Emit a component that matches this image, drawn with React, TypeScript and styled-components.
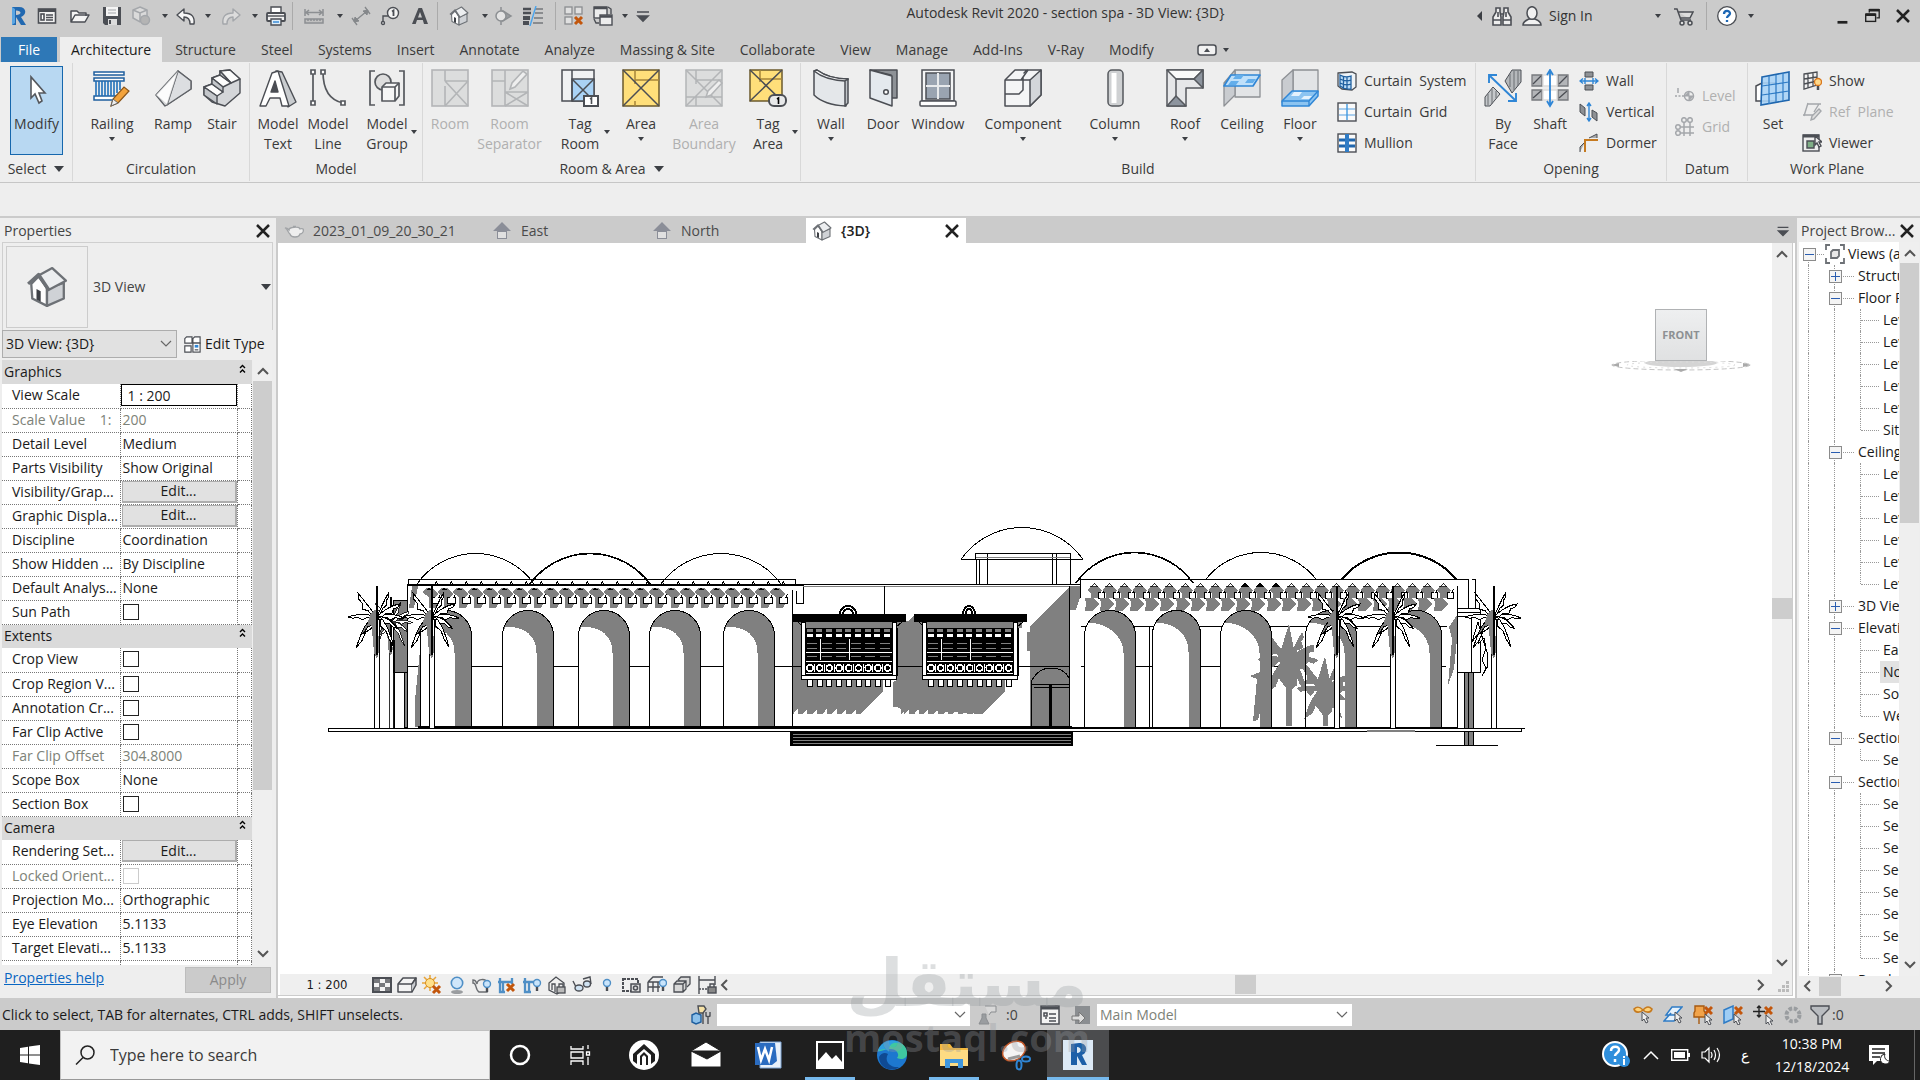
import React from "react";
import styled, { createGlobalStyle } from "styled-components";

const Global = createGlobalStyle`
  * { box-sizing: border-box; }
  html, body { margin: 0; height: 100%; overflow: hidden; }
  body { font-family: "Open Sans", "Noto Sans", sans-serif; font-size: 14px; line-height: 20px; color: #1a1a1a; background: #eee; }
  button, input, select { font: inherit; color: inherit; margin: 0; padding: 0; border: 0; background: none; border-radius: 0; }
  button { white-space: nowrap; }
  svg { display: block; flex: none; }
`;

/* ---------- icons ---------- */
const D = "#4b4e54";
const M = "#a4a7ab";
const B = "#2f86d6";
const O = "#d9781e";

const cursor = (x: number, y: number) => (
  <path d={`M${x} ${y}v9l2-2 2 4 2-1-2-4h3z`} fill="#eee" stroke={D} />
);
const redX = (x: number, y: number) => (
  <path d={`M${x} ${y}l7 7m0-7l-7 7`} stroke="#c2560c" strokeWidth="3" />
);
const bulb = (x: number, y: number) => (
  <g>
    <circle cx={x} cy={y} r="3.5" fill="#c9e4fb" stroke="#4f8fc6" strokeWidth="1.4" />
    <path d={`M${x} ${y + 4}v4`} stroke={D} strokeWidth="2.4" />
  </g>
);
const house = (
  <g stroke="#6d7176" strokeWidth="1.1" strokeLinejoin="round">
    <path d="M2.500 8.500L6 5l4 5.500V19l-7-3.500z" fill="#fdfdfd" />
    <path d="M10 10.500l8-2.500v7.500L10 19z" fill="#cfd2d6" />
    <path d="M6 4.500L12.500 1 19 7l-8.500 4.500z" fill="#eceef0" />
    <path d="M1 8.500L6 4l5 7.500" fill="none" strokeWidth="1.500" />
    <path d="M5 16v-5l2 1v5z" fill="#3c3f44" stroke="none" />
  </g>
);

const icons: Record<string, React.ReactNode> = {
  revit: (
    <g>
      <path d="M4 1h7c8 0 8 8 2 10l5 8h-5l-5-8v8H4zM8 4.500V9c6 0 6-4.500 0-4.500z" fill="#2168b0" fillRule="evenodd" />
      <path d="M4 1l3 2v14l-3 2z" fill="#5aa5e2" />
    </g>
  ),
  home: (
    <g fill="none" stroke={D} strokeWidth="1.600">
      <rect x="1.500" y="3" width="17" height="14" fill="#f2f2f2" />
      <path d="M1 4.500h18" strokeWidth="3" />
      <rect x="4" y="8" width="3" height="6" fill="#fff" />
      <path d="M9 9h7M9 11.500h7M9 14h7" />
    </g>
  ),
  open: (
    <path d="M1 16V5h6l2 2h7v3M1 16l4-7h14l-4 7z" fill="#f4f4f4" stroke={D} strokeWidth="1.500" strokeLinejoin="round" />
  ),
  save: (
    <g>
      <path d="M1 1h18v18H3l-2-2z" fill={D} />
      <path d="M4 1h12v9H4z" fill="#f4f4f4" />
      <path d="M6 13h9v6H6z" fill="#dcdcdc" />
      <path d="M7 14h2v4H7z" fill={D} />
      <path d="M6 4h8M6 7h8" stroke={M} />
    </g>
  ),
  sync: (
    <g fill="#dadada" stroke={M} strokeWidth="1.500">
      <path d="M9 1l7 3v8l-7 4-7-4V4z" />
      <path d="M2 4l7 3 7-3M9 7v9" fill="none" />
      <circle cx="14" cy="14" r="4.500" fill="#b4b4b4" />
    </g>
  ),
  undo: <path d="M8 3v4c8 0 11 4 10 11h-4c0-5-2-7-6-7v4L1 9z" fill="#f6f6f6" stroke={D} strokeWidth="1.400" strokeLinejoin="round" />,
  redo: <path d="M12 3v4C4 7 1 11 2 18h4c0-5 2-7 6-7v4l7-6z" fill="#dcdcdc" stroke={M} strokeWidth="1.400" strokeLinejoin="round" />,
  print: (
    <g stroke={D} strokeWidth="1.400">
      <path d="M5 8V1h10v7" fill="#fff" />
      <rect x="1" y="7" width="18" height="8" rx="1" fill="#f2f2f2" strokeWidth="1.800" />
      <path d="M1 10h18" />
      <path d="M5 13h10v6H5z" fill="#e0eef8" />
      <path d="M7 16h6" stroke={B} />
    </g>
  ),
  measure: (
    <g stroke="#8c8f92" fill="none" strokeWidth="1.500">
      <path d="M1 3v7M19 3v7M2 6.500h16M5 4L2 6.500 5 9M15 4l3 2.500L15 9" />
      <path d="M1 13h18v4H1zM4 13v2M7 13v2M10 13v2M13 13v2M16 13v2" fill="#c0c0c0" />
    </g>
  ),
  dim: (
    <g stroke="#85888b" fill="#85888b">
      <path d="M4 15L16 5M1 12l5 7M14 1l5 7" fill="none" strokeWidth="1.300" />
      <path d="M3 16l1-5 4 4zM17 4l-5 1 4 4z" />
    </g>
  ),
  tag: (
    <g stroke={D} fill="none" strokeWidth="1.400">
      <path d="M3 17V10h5" />
      <circle cx="13" cy="7" r="5.500" fill="#f4f4f4" />
      <path d="M12 5.500l1.500-1V10" strokeWidth="1.800" />
      <circle cx="3" cy="17" r="1.500" fill="#fff" />
    </g>
  ),
  textA: <path d="M8.500 2h3.500l6 16h-4l-1.200-4H7l-1.300 4H2zM10 6l-2 5.500h4z" fill={D} fillRule="evenodd" />,
  house,
  section: (
    <g fill="#e3e3e3" stroke="#8c8f92" strokeWidth="1.500">
      <path d="M10 5l8 5-8 5z" fill="#9a9da0" />
      <circle cx="8" cy="10" r="5" />
      <path d="M8 1v4M8 15v4" />
    </g>
  ),
  thin: (
    <g stroke={D}>
      <path d="M0 3h8M0 7h8" strokeWidth="2.500" />
      <path d="M0 12h7M0 17h6" strokeWidth="4" />
      <path d="M12 3h8M12 7h8M11 12h9M10 17h10" strokeWidth="1.200" />
      <path d="M13 0L7 20" stroke="#49a4ee" strokeWidth="1.400" />
    </g>
  ),
  closeHidden: (
    <g stroke="#8a8d90" fill="#e0e0e0" strokeWidth="1.300">
      <rect x="1" y="1" width="7" height="7" />
      <rect x="11" y="1" width="7" height="7" />
      <rect x="1" y="11" width="7" height="7" />
      {redX(11, 11)}
    </g>
  ),
  switchWin: (
    <g stroke={D} fill="#ededed" strokeWidth="1.400">
      <path d="M15 1l3 2v5M1 13l2 4h3" fill="none" />
      <rect x="1" y="1" width="13" height="11" />
      <path d="M1 2h13" strokeWidth="2.500" />
      <rect x="7" y="9" width="12" height="10" />
      <path d="M7 10.500h12" strokeWidth="2.500" />
    </g>
  ),
  custom: <path d="M4 6h12M5 10h10l-5 5z" stroke={D} strokeWidth="1.600" fill={D} />,
  binoculars: (
    <g fill="#eee" stroke={D} strokeWidth="1.600">
      <path d="M4 6V2h4v4l1 5v8H1v-8zM12 6V2h4v4l3 5v8h-8v-8z" />
      <path d="M9 8h2M1 14h8M11 14h8M6 6v5M14 6v5" />
    </g>
  ),
  user: (
    <g fill="#f1f1f1" stroke={D} strokeWidth="1.500">
      <path d="M1 19c0-4 4-5 6-6h6c2 1 6 2 6 6z" />
      <ellipse cx="10" cy="7" rx="5" ry="6.300" />
    </g>
  ),
  cart: (
    <g fill="#ddd" stroke={D} strokeWidth="1.500">
      <path d="M0 3h3l4 11h10M4 6h15l-3 6H6.500" />
      <circle cx="8" cy="17" r="2" />
      <circle cx="16" cy="17" r="2" />
    </g>
  ),
  help: (
    <g>
      <circle cx="10" cy="10" r="9.300" fill="#fff" stroke={D} strokeWidth="1.300" />
      <path d="M7 8c0-4 6-4 6-.5 0 2-3 2-3 4.500M10 14v2" fill="none" stroke="#1d67b4" strokeWidth="2.300" />
    </g>
  ),
  min: <path d="M5 17h11" stroke="#222" strokeWidth="3" />,
  restore: (
    <g fill="none" stroke="#222" strokeWidth="1.500">
      <path d="M7 6V3h11v9h-3" />
      <path d="M7 3.500h11" strokeWidth="3" />
      <rect x="3" y="8" width="11" height="8" />
      <path d="M3 8.500h11" strokeWidth="3" />
    </g>
  ),
  close: <path d="M4 4l12 12M16 4L4 16" stroke="#222" strokeWidth="2.500" />,
  panelSwitch: (
    <g fill="none" stroke={D} strokeWidth="1.500">
      <rect x="1" y="5" width="18" height="10" rx="2.500" fill="#f2f2f2" />
      <path d="M7 12l3-4 3 4z" fill={D} stroke="none" />
    </g>
  ),
  csystem: (
    <g fill="#bcdcf7" stroke="#1f5f9f" strokeWidth="1.300">
      <path d="M1 2l14-1 4 2v13l-4 3-10-1-4-3z" fill="#eef3f7" stroke={D} />
      <path d="M3 4q5 3 11 1v13q-6 1-11-3zM6.500 5v13M10 5.500V18M3 8q6 3 11 1M3 12q6 3 11 1" />
    </g>
  ),
  cgrid: (
    <g fill="#fafafa" stroke={D} strokeWidth="1.400">
      <rect x="1" y="1" width="18" height="18" />
      <path d="M2 7h16M2 13h16" stroke="#8fc0ea" />
      <path d="M10 2v16" stroke="#3f99e0" />
    </g>
  ),
  mullion: (
    <g fill="#fafafa" stroke={D} strokeWidth="1.400">
      <rect x="1" y="1" width="18" height="18" />
      <path d="M2 7h16M2 13h16" stroke="#1f66ae" strokeWidth="3" />
      <path d="M10 1v18" stroke="#2f7cc6" strokeWidth="4" />
    </g>
  ),
  owall: (
    <g stroke={D} fill="#8f9296">
      <path d="M6 1h8v5H6zM6 14h8v5H6z" />
      <path d="M1 10h18M4 7.500L1 10l3 2.500M16 7.500l3 2.500-3 2.500M6 7v6M14 7v6" stroke={B} strokeWidth="1.400" fill="none" />
    </g>
  ),
  overt: (
    <g stroke={D} fill="#8d9094">
      <path d="M1 2l5 4v8l-5-4zM13 8l5 3v8l-5-4z" />
      <path d="M10 1v18M8 4l2-3 2 3M8 16l2 3 2-3" stroke={B} strokeWidth="1.400" fill="none" />
    </g>
  ),
  dormer: (
    <g fill="none" stroke={D}>
      <path d="M1 19v-5l5-5M10 5l8-4v4" fill="#aaa" />
      <path d="M6 19V7h13" stroke="#c67a1f" strokeWidth="2" />
    </g>
  ),
  level: (
    <g stroke={M} fill={M}>
      <path d="M0 10h9" strokeDasharray="2 1.500" strokeWidth="1.500" />
      <path d="M3 2v5" strokeWidth="1.500" />
      <circle cx="14" cy="10" r="4.500" fill="#eee" strokeWidth="1.500" />
      <path d="M14 5.500V10H9.500zM14 14.500V10h4.500z" />
    </g>
  ),
  grid: (
    <g stroke={M} fill="none" strokeWidth="1.500">
      <circle cx="9" cy="3" r="2.300" />
      <circle cx="15" cy="3" r="2.300" />
      <circle cx="3" cy="10" r="2.300" />
      <circle cx="3" cy="16" r="2.300" />
      <path d="M9 5v14M15 5v14M5 10h14M5 16h14" />
    </g>
  ),
  show: (
    <g stroke={D} fill="#f2f2f2" strokeWidth="1.300">
      <path d="M2 3l13-2v13L2 18zM6 3v14M11 2v13M2 8l13-2M2 13l13-3" />
      <circle cx="16" cy="11" r="3.500" fill="#ffd98a" stroke={O} />
      <path d="M16 15v4" strokeWidth="2.500" />
    </g>
  ),
  refplane: (
    <g stroke={M} fill="none" strokeWidth="1.400">
      <path d="M5 2h14M2 14L6 1M1 13h11M12 10l5-8" />
      <path d="M9 18l1-4 7-7 2 2-7 8z" fill="#ddd" />
    </g>
  ),
  viewer: (
    <g stroke={D} fill="#eee" strokeWidth="1.400">
      <rect x="1" y="2" width="16" height="16" />
      <path d="M1 3h16" strokeWidth="3" />
      <path d="M5 8h7v7H5z" fill="#7fae86" />
      {cursor(13, 3)}
    </g>
  ),
  teapot: (
    <path d="M1 7c3 0 3 1 4 2 0-3 10-4 11-1 3-1 4 0 3 3-1 2-2 2-3 2-1 4-9 4-10 0-2-1-2-5-5-6zM9 5.500h3" fill="#eee" stroke="#a0a3a6" strokeWidth="1.300" />
  ),
  elev: (
    <g>
      <path d="M10 1l9 9h-4v8H5v-8H1z" fill="#8b8e98" />
      <path d="M6 11h8v6H6z" fill="#e0e0e0" />
    </g>
  ),
  editType: (
    <g fill="#fff" stroke={D} strokeWidth="1.300">
      <path d="M2 4l2-2h6v7H2zM11 4l2-2h6v7h-8zM2 12h7v7H2z" />
      <rect x="11" y="9" width="8" height="10" />
      <path d="M13 11h4v3h-4z" fill={B} stroke="none" />
      <path d="M13 16.500h4" />
    </g>
  ),
  viewsRoot: (
    <g fill="none" stroke="#6d7176" strokeWidth="1.800">
      <path d="M1 6V1h4M15 1h4v5M19 14v5h-4M5 19H1v-5" />
      <path d="M6 8l2-2h6v6l-2 2H6z" fill="#e8e8e8" />
    </g>
  ),
  vDetail: (
    <g>
      <rect x="1" y="3" width="18" height="14" fill="#f4f4f4" stroke={D} strokeWidth="2" />
      <path d="M2 4h6v4H2zM13 4h5v4h-5zM7 8h6v4H7zM2 12h6v4H2zM13 12h5v4h-5z" fill="#77797d" />
    </g>
  ),
  vStyle: (
    <g fill="#f4f4f4" stroke={D} strokeWidth="1.500" strokeLinejoin="round">
      <path d="M1 9l5-6h13l-4 6v8H1z" />
      <path d="M1 9h14M15 9l4-6v7l-4 7" fill="#c9ccd0" />
    </g>
  ),
  vSun: (
    <g>
      <path d="M8 0v16M0 8h16M2 2l12 12M14 2L2 14" stroke="#e8a53a" strokeWidth="1.500" />
      <circle cx="8" cy="8" r="4.500" fill="#ffe08a" stroke="#d98f1d" />
      {redX(11, 11)}
    </g>
  ),
  vShadow: (
    <g>
      <ellipse cx="10" cy="17" rx="6" ry="2" fill="#9a9da0" />
      <circle cx="10" cy="8" r="5.700" fill="#cfe6fa" stroke="#4f8fc6" strokeWidth="1.600" />
    </g>
  ),
  vRender: (
    <g>
      <path d="M1 5c3 0 3 2 4 4 0-5 8-6 10-2v10H7c-4-2-2-9-6-9z" fill="#eee" stroke="#6b6e72" strokeWidth="1.400" />
      {bulb(15, 9)}
    </g>
  ),
  vCrop: (
    <g>
      <path d="M3 3v14h5M1 7h14M6 7v10M15 3v6" fill="none" stroke="#4f8fc6" strokeWidth="2.300" />
      {redX(10, 9)}
    </g>
  ),
  vCropShow: (
    <g>
      <path d="M3 3v14h6M1 7h12M7 7v10" fill="none" stroke="#4f8fc6" strokeWidth="2.300" />
      {bulb(15, 8)}
    </g>
  ),
  vLock: (
    <g stroke={D} strokeWidth="1.300" fill="#f0f0f0">
      <path d="M2 8l7-6 8 6v6l-7 5-8-4z" />
      <path d="M5 15v-6h3v8" />
      <rect x="10" y="12" width="8" height="6" fill="#bbb" />
      <path d="M12 12V9h4v3" fill="none" />
    </g>
  ),
  vGlasses: (
    <g stroke={D} strokeWidth="1.400" fill="#cfe2f2">
      <path d="M1 6l3 6M11 4l7-2 1 7" fill="none" />
      <ellipse cx="7" cy="13" rx="4" ry="3" />
      <ellipse cx="15" cy="9" rx="3.500" ry="3" />
    </g>
  ),
  vBulb: bulb(10, 8),
  vTemp: (
    <g stroke={D} strokeWidth="1.500" fill="none">
      <rect x="1" y="4" width="15" height="12" strokeDasharray="3 1" strokeWidth="2" />
      <rect x="9" y="9" width="9" height="8" fill="#ddd" />
      <circle cx="13.500" cy="13" r="2" />
    </g>
  ),
  vAnalytic: (
    <g stroke={D} strokeWidth="1.400" fill="none">
      <path d="M1 7l5-5h10M1 7v10M6 7v10M11 7v10M1 7h12M1 12h12" />
      {bulb(16, 8)}
    </g>
  ),
  vHigh: (
    <g stroke={D} strokeWidth="1.300" fill="#d8d8d8">
      <path d="M6 5l3-3h9v7l-3 3" />
      <path d="M2 9l3-3h9v8l-3 3H2zM2 9h9v8M11 9l3-3M7 6v-1" />
    </g>
  ),
  vReveal: (
    <g stroke={D} strokeWidth="1.400" fill="none">
      <path d="M2 1v18M18 1v9M2 5h16" />
      <path d="M2 14h8" strokeDasharray="2 1" />
      <rect x="11" y="12" width="8" height="6" fill="#888" />
      <path d="M13 12V9h4v3" />
    </g>
  ),
  workset: (
    <g strokeWidth="1.400">
      <path d="M1 10l4-2 5 2v7l-5 2-4-2z" fill="#8cc0ea" stroke="#1f5f9f" />
      <path d="M7 1h6l2 3-3 4H8z" fill="#f6e2a6" stroke={D} />
      <path d="M12 8v11M15 7v4l2 1 2-1V7M17 12v7" stroke={D} />
    </g>
  ),
  editable: (
    <g fill="#9a9da0" stroke="#8a8d90">
      <path d="M7 1h11v6h-5l-2 3" fill="#d8d8d8" />
      <path d="M8 9v4l3 6H1l3-6V9z" />
    </g>
  ),
  options: (
    <g stroke={D} fill="#f4f4f4" strokeWidth="1.500">
      <rect x="1" y="1" width="18" height="18" />
      <path d="M1 3h18" strokeWidth="3" />
      <path d="M4 8h3v3H4zM9 9h7M9 13h7M5 13h2M9 16h7" />
    </g>
  ),
  addSet: (
    <g>
      <rect x="4" y="1" width="15" height="18" fill="#8b8e91" />
      <path d="M1 11h7V7l6 6-6 6v-4H1z" fill="#ddd" stroke="#777" />
    </g>
  ),
  selLink: (
    <g>
      <path d="M1 4c4-4 7-1 9 1 2-2 5-5 9-1-1 4-6 4-9 1-3 3-8 3-9-1z" fill="#ffd37a" stroke="#c67a1f" strokeWidth="1.600" />
      {cursor(9, 7)}
    </g>
  ),
  selUnder: (
    <g>
      <path d="M9 2h10l-7 8H3zM8 8L1 16h10l4-5" fill="#e6f2fc" stroke="#2f7cc6" strokeWidth="1.500" />
      {cursor(12, 7)}
    </g>
  ),
  selPin: (
    <g>
      <path d="M2 1h9v5l2 2v4H1V8l1-2zM6 12v7" fill="#f1a34a" stroke="#a75a10" strokeWidth="1.400" />
      {redX(12, 2)}
      {cursor(12, 9)}
    </g>
  ),
  selFace: (
    <g>
      <path d="M1 5l9-4v13l-9 4z" fill="#9fcdf4" stroke="#2f7cc6" strokeWidth="1.500" />
      {redX(12, 2)}
      {cursor(11, 9)}
    </g>
  ),
  selDrag: (
    <g>
      <path d="M6 1v11M0 6.500h12M4 3l2-2 2 2M4 10l2 2 2-2" fill="none" stroke="#222" strokeWidth="1.400" />
      {redX(12, 2)}
      {cursor(13, 10)}
    </g>
  ),
  gear: <circle cx="10" cy="10" r="6.500" fill="none" stroke="#9a9da0" strokeWidth="4" strokeDasharray="3.500 1.600" />,
  filter: <path d="M1 1h18v3l-7 7v8H8v-8L1 4z" fill="#b9bcc0" stroke={D} strokeWidth="1.400" />,
};

const big: Record<string, React.ReactNode> = {
  modify: <path d="M13 8v21l4-4 4 9 3-2-3-8h6z" fill="#fff" stroke="#55585d" strokeWidth="1.600" />,
  railing: (
    <g>
      <path d="M1 3h30v3H1zM1 9h30v3H1zM1 27h22v4H1z" fill="#fff" stroke="#1f5f9f" strokeWidth="1.500" />
      <path d="M3 12v15M6 12v15M9 12v15M12 12v15M15 12v15M18 12v15M21 12v15M24 12v12M27 12v9" stroke="#2170b9" strokeWidth="1.600" />
      <path d="M18 37l2-7 11-12 5 4-11 12z" fill="#f3a33c" stroke="#8a551a" strokeWidth="1.200" />
      <path d="M18 37l2-7 5 4z" fill="#eee" stroke="#666" />
    </g>
  ),
  ramp: (
    <g stroke="#5f6267" strokeWidth="1.400" strokeLinejoin="round">
      <path d="M24 2L2 26l9 11 26-17V12z" fill="#f6f6f7" />
      <path d="M24 2l13 10v8L13 36z" fill="#dcdee1" />
      <path d="M24 2L2 26l11 10z" fill="#fcfcfc" strokeOpacity=".25" />
    </g>
  ),
  stair: (
    <g stroke={D} strokeWidth="1.400" strokeLinejoin="round">
      <path d="M1 18l8-3V9l8-3V2l10-1 10 9v14L22 37 9 33 1 26z" fill="#d4d6d9" />
      <path d="M1 18l8-3 11 8-6 4zM9 9l8-3 11 8-8 4zM17 2l10-1 10 9-9 4z" fill="#fcfcfc" />
      <path d="M1 18l13 9v8L1 26zM9 9l11 9v5L9 15zM17 2l11 12v0L17 6z" fill="#c3c6ca" />
    </g>
  ),
  mtext: (
    <g stroke={D} strokeWidth="1.400" strokeLinejoin="round">
      <path d="M17 2l6 1 14 30-8 5z" fill="#c9cccf" />
      <path d="M13 4l6-2 11 35h-7l-2-8H11l-4 8H1z" fill="#fff" />
      <path d="M16 12l-4 11h7z" fill={D} />
    </g>
  ),
  mline: (
    <g stroke="#55585d" strokeWidth="1.700" fill="none">
      <path d="M4 3v31M14 3c0 16 6 28 20 31" />
      <path d="M2 1h4v4H2zM2 32h4v4H2zM12 1h4v4h-4zM32 32h4v4h-4z" fill="#fff" />
    </g>
  ),
  mgroup: (
    <g stroke="#55585d" strokeWidth="1.700" fill="none">
      <path d="M7 2H2v34h5M31 2h5v34h-5" />
      <circle cx="15" cy="13" r="8" fill="#ddd" />
      <path d="M14 18l4-4h13v13l-4 5H14z" fill="#f6f6f6" strokeLinejoin="round" />
      <path d="M14 18h13v14M27 18l4-4" />
    </g>
  ),
  room: (
    <g stroke="#b3b5b7" strokeWidth="1.600" fill="#dcdddd">
      <rect x="1" y="1" width="36" height="36" />
      <path d="M14 1v11M14 17v20M14 12h23M14 12l23 25M37 12L14 37" fill="none" />
    </g>
  ),
  roomsep: (
    <g stroke="#b3b5b7" strokeWidth="1.600" fill="#dcdddd">
      <rect x="1" y="1" width="36" height="36" />
      <path d="M14 1v36M14 23h23M14 23l23 14M37 23L14 37M1 12h13" fill="none" />
      <path d="M19 20l2-6L32 2l4 3-12 13z" fill="#eee" />
    </g>
  ),
  tagroom: (
    <g stroke={D} strokeWidth="1.500" fill="#f0f1f2">
      <rect x="1" y="1" width="32" height="31" />
      <path d="M11 10h22v22H11z" fill="#a9d2f5" />
      <path d="M11 1v31M11 10l22 22M33 10L11 32" fill="none" />
      <rect x="23" y="27" width="14" height="10" fill="#fff" strokeWidth="2" />
      <path d="M29 30l1.500-1v6" fill="none" strokeWidth="1.600" />
    </g>
  ),
  area: (
    <g stroke="#a6853a" strokeWidth="1.500" fill="#ffdf7a">
      <rect x="1" y="1" width="36" height="36" stroke="#6b5a2d" />
      <path d="M13 1v14M13 11h24M13 32v5" fill="none" />
      <path d="M1 1l36 36M37 1L1 37" fill="none" stroke={D} />
    </g>
  ),
  areab: (
    <g stroke="#b3b5b7" strokeWidth="1.500" fill="#dcdddd">
      <rect x="1" y="1" width="36" height="36" />
      <path d="M1 1l36 36M37 1L1 37M11 1v14M11 11h26M11 28v9M1 28h36" fill="none" />
      <path d="M21 28l2-6 11-11 3 3-11 12z" fill="#eee" />
    </g>
  ),
  tagarea: (
    <g stroke="#6b5a2d" strokeWidth="1.500" fill="#ffdf7a">
      <rect x="1" y="1" width="32" height="31" />
      <path d="M11 1v12M11 10h22" fill="none" stroke="#a6853a" />
      <path d="M1 1l32 31M33 1L1 32" fill="none" stroke={D} />
      <rect x="20" y="26" width="17" height="11" rx="5" fill="#e8e9ea" stroke={D} strokeWidth="2" />
      <path d="M28 30l1.500-1v6" fill="none" stroke="#000" strokeWidth="1.600" />
    </g>
  ),
  wall: (
    <g stroke={D} strokeWidth="1.500" strokeLinejoin="round">
      <path d="M2 2l3-1q12 9 31 9l-2 3v24Q12 36 2 26z" fill="#e4e7ea" />
      <path d="M2 2l3-1q12 9 31 9l-3 2Q13 11 2 2z" fill="#fff" />
      <path d="M33 12l3-2v24l-3 3z" fill="#c2c6ca" />
    </g>
  ),
  door: (
    <g stroke={D} strokeWidth="1.500" strokeLinejoin="round">
      <path d="M6 1h27v28h-6V6z" fill="#8d9196" />
      <path d="M6 1l22 6v30L6 29z" fill="#e4e9ee" />
      <circle cx="22" cy="23" r="2.300" fill="#fff" />
    </g>
  ),
  window: (
    <g stroke={D} strokeWidth="1.500">
      <path d="M3 1h32v31H3z" fill="#f4f5f6" />
      <path d="M7 4h24v26H7z" fill="#9aa4b1" />
      <path d="M19 4v26M7 17h24" stroke="#e8eaec" strokeWidth="2" />
      <rect x="1" y="32" width="36" height="5" rx="1" fill="#fff" />
    </g>
  ),
  component: (
    <g stroke={D} strokeWidth="1.500" strokeLinejoin="round">
      <path d="M1 11L11 1h12l-3 3 3-3h14v25L26 37H1z" fill="#f4f5f6" />
      <path d="M26 11L37 1v25L26 37z" fill="#d3d6da" />
      <path d="M1 11h16l7-10M17 11h9M1 25h14l4-4V11M19 21V8" fill="none" />
    </g>
  ),
  column: (
    <g>
      <rect x="12" y="1" width="15" height="36" rx="4" fill="#cfd1d3" stroke="#55585d" strokeWidth="1.500" />
      <path d="M18 4v30" stroke="#fff" strokeWidth="5" />
    </g>
  ),
  roof: (
    <g stroke="#55585d" strokeWidth="1.500" strokeLinejoin="round">
      <path d="M1 1h36v18H20v18H1z" fill="#e6e7e9" />
      <path d="M1 1h36l-9 9H10z" fill="#fafafa" />
      <path d="M37 1v18l-9-9zM1 37l9-10 10 10z" fill="#8d949e" />
      <path d="M10 10v17M10 10h18" fill="none" />
    </g>
  ),
  ceiling: (
    <g stroke="#8d9094" strokeWidth="1.300" strokeLinejoin="round">
      <path d="M12 1h25v27H12z" fill="#e2e4e6" />
      <path d="M1 14L12 1v25L1 37z" fill="#c9ccd0" />
      <path d="M8 6h29l-7 11H1z" fill="#bfe0fa" stroke={B} strokeWidth="1.700" />
      <path d="M13 6h8l-3 4h-8zM25 10h8l-3 4h-8zM8 12h8l-3 4H5z" fill="#63aeeb" stroke="none" />
    </g>
  ),
  floor: (
    <g stroke="#8d9094" strokeWidth="1.300" strokeLinejoin="round">
      <path d="M12 1h25v22H12z" fill="#e2e4e6" />
      <path d="M1 11L12 1v22L1 33z" fill="#c9ccd0" />
      <path d="M11 22h26v5l-9 10H1v-5z" fill="#8cc4f1" stroke={B} strokeWidth="1.500" />
      <path d="M1 32h27l9-10M28 32v5" fill="none" stroke={B} />
      <path d="M13 23h8l-3 4h-8zM23 27h8l-3 3h-8z" fill="#e4f2fd" stroke="none" />
    </g>
  ),
  byface: (
    <g stroke={D} strokeWidth="1">
      <path d="M21 12L28 1h9v12l-9 11z" fill="#b5b8bb" />
      <path d="M1 37V28l8-10 7 7L6 37z" fill="#c5c8cb" />
      <path d="M4 25v11M8 20v15M12 22v7M26 5v13M30 2v19M34 2v15" stroke="#6b6e72" />
      <path d="M6 7l25 24M5 14V6h8M32 24v8h-8" stroke={B} strokeWidth="1.900" fill="none" />
    </g>
  ),
  shaft: (
    <g stroke="#77797d" strokeWidth="1.300">
      <path d="M1 6h10v11H1zM27 6h10v11H27zM1 21h10v10H1zM27 21h10v10H27z" fill="#b3b5b8" />
      <path d="M2 15l8-8M2 29l8-7M28 15l8-8M28 29l8-7" stroke={D} />
      <path d="M12 6h14v11H12zM12 21h14v10H12z" fill="#fff" stroke="#ddd" />
      <path d="M19 2v34M16 6l3-5 3 5M16 32l3 5 3-5" stroke={B} strokeWidth="1.800" fill="none" />
    </g>
  ),
  set: (
    <g>
      <path d="M2 17l6-3h14v18H2z" fill="#fff" stroke={D} strokeWidth="1.500" />
      <path d="M8 8l27-5v28L7 36z" fill="#a8d3f6" fillOpacity=".9" stroke="#1f66ae" strokeWidth="1.600" />
      <path d="M15 7v28M22 6v27M29 4v28M8 17l27-4M8 26l27-4" stroke="#2f7cc6" strokeWidth="1.200" />
    </g>
  ),
};

const Icon = ({ name, size = 20 }: { name: string; size?: number }) => (
  <svg width={size} height={size} viewBox="0 0 20 20" fill="none" aria-hidden="true">
    {icons[name]}
  </svg>
);
const BigIcon = ({ name }: { name: string }) => (
  <svg width="38" height="40" viewBox="0 0 38 40" fill="none" aria-hidden="true">
    {big[name]}
  </svg>
);

/* ---------- shell ---------- */
const Shell = styled.div`
  height: 100vh;
  display: flex;
  flex-direction: column;
  position: relative;
`;
const TitleBar = styled.header`
  height: 37px;
  background: #cbcbcb;
  display: grid;
  grid-template-columns: auto 1fr auto;
  align-items: start;
`;
const QuickBar = styled.div`
  display: flex;
  align-items: center;
  height: 32px;
  padding-left: 3px;
`;
const IconButton = styled.button<{ $w?: number }>`
  width: ${(p) => p.$w ?? 30}px;
  height: 28px;
  display: flex;
  align-items: center;
  justify-content: center;
  flex: none;
`;
const Caret = styled.i<{ $s?: number }>`
  border: ${(p) => p.$s ?? 3}px solid transparent;
  border-top: ${(p) => (p.$s ?? 3) + 1}px solid #3c3f44;
  border-bottom: 0;
  flex: none;
`;
const CaretButton = styled.button`
  width: 15px;
  height: 28px;
  display: flex;
  align-items: center;
  justify-content: center;
`;
const VRule = styled.i`
  width: 1px;
  height: 28px;
  margin: 0 3px;
  background: #aaa;
`;
const WindowTitle = styled.h1`
  margin: 0;
  padding-top: 3px;
  font-size: 14px;
  line-height: 20px;
  font-weight: 400;
  text-align: center;
  color: #333;
`;
const TitleRight = styled.div`
  display: flex;
  align-items: center;
  height: 32px;
  padding-right: 2px;
`;
const WindowButtons = styled.div`
  display: flex;
  margin-left: 70px;
`;
const SignIn = styled.button`
  display: flex;
  align-items: center;
  gap: 7px;
  width: 128px;
  color: #333;
`;
const LeftArrow = styled.i`
  border: 5px solid transparent;
  border-right-color: #3c3f44;
  border-left: 0;
`;

const RibbonTabs = styled.nav`
  height: 25px;
  background: #cbcbcb;
  display: flex;
  gap: 1px;
  padding-left: 1px;
`;
const RibbonTab = styled.button<{ $kind?: "file" | "active" }>`
  height: 25px;
  padding: 0 12px;
  color: ${(p) => (p.$kind === "file" ? "#fff" : p.$kind ? "#1a1a1a" : "#3a3a3a")};
  background: ${(p) => (p.$kind === "file" ? "#2e78b7" : p.$kind ? "#eee" : "transparent")};
  ${(p) => p.$kind === "file" && "width: 56px; margin-right: 2px;"}
  ${(p) => p.$kind === "active" && "padding: 0 11px;"}
`;
const TabsTool = styled.button`
  display: flex;
  align-items: center;
  gap: 6px;
  margin-left: 30px;
`;

const Ribbon = styled.div`
  height: 121px;
  background: #eee;
  border-bottom: 1px solid #c6c6c6;
  display: flex;
`;
const Panel = styled.section<{ $w?: number; $pad?: number }>`
  ${(p) => (p.$w ? `width: ${p.$w}px; flex: none;` : "flex: 1;")}
  margin: 1px 0;
  border-right: 1px solid #d8d8d8;
  display: flex;
  flex-direction: column;
  & > div { padding-left: ${(p) => p.$pad ?? 0}px; }
  &:last-child { border-right: 0; }
`;
const PanelBody = styled.div`
  flex: 1;
  min-height: 0;
  display: flex;
  padding-top: 3px;
`;
const PanelTitle = styled.footer<{ $shift?: number }>`
  height: 24px;
  flex: none;
  display: flex;
  align-items: center;
  justify-content: center;
  gap: 8px;
  color: #3a3a3a;
  padding-right: ${(p) => p.$shift ?? 0}px;
`;
const BigButton = styled.button<{ $w: number; $off?: boolean; $on?: boolean }>`
  width: ${(p) => p.$w}px;
  height: 89px;
  flex: none;
  position: relative;
  display: flex;
  flex-direction: column;
  align-items: center;
  padding-top: 3px;
  color: ${(p) => (p.$off ? "#b0b0b0" : "#3a3a3a")};
  ${(p) => p.$on && "background: #b8d8f2; border: 1px solid #1667ad; padding-top: 2px;"}
  & > span { line-height: 20px; margin-top: 5px; white-space: pre; text-align: center; }
  & > i { margin-top: 3px; }
`;
const SideCaret = styled(Caret)`
  position: absolute;
  left: calc(50% + 24px);
  top: 64px;
`;
const List = styled.div<{ $mid?: boolean; $ml?: number }>`
  display: flex;
  flex-direction: column;
  justify-content: ${(p) => (p.$mid ? "center" : "flex-start")};
  height: 92px;
  margin-top: -1px;
  margin-left: ${(p) => p.$ml ?? 4}px;
`;
const ListButton = styled.button<{ $off?: boolean }>`
  height: 31px;
  flex: none;
  display: flex;
  align-items: center;
  gap: 7px;
  white-space: pre;
  color: ${(p) => (p.$off ? "#b0b0b0" : "#3a3a3a")};
`;
const OptionsBar = styled.div`
  height: 33px;
  background: #eee;
`;

/* ---------- workspace ---------- */
const Workspace = styled.main`
  flex: 1;
  min-height: 0;
  display: grid;
  grid-template-columns: 276px minmax(0, 1fr) 123px;
  gap: 2px;
  padding-top: 2px;
  background: #cbcbcb;
`;
const Side = styled.aside`
  background: #eee;
  display: flex;
  flex-direction: column;
  min-height: 0;
  min-width: 0;
`;
const SideHead = styled.div`
  height: 24px;
  flex: none;
  display: flex;
  align-items: center;
  justify-content: space-between;
  padding: 1px 3px 0 4px;
  color: #444;
  white-space: nowrap;
`;
const TypeBox = styled.div`
  height: 88px;
  flex: none;
  margin: 0 3px 0 2px;
  border: 1px solid #cfcfcf;
  border-bottom: 0;
  display: flex;
  align-items: center;
  padding: 3px 1px 3px 3px;
  color: #444;
  & > span { flex: 1; padding-left: 5px; }
`;
const Thumb = styled.div`
  width: 82px;
  height: 82px;
  border: 1px solid #ccc;
  display: grid;
  place-items: center;
`;
const InstanceRow = styled.div`
  height: 30px;
  flex: none;
  display: flex;
  align-items: center;
  gap: 6px;
  padding: 0 2px 2px;
`;
const SelectWrap = styled.div<{ $w: number; $flat?: boolean; $dim?: boolean }>`
  width: ${(p) => p.$w}px;
  height: ${(p) => (p.$flat ? 22 : 28)}px;
  flex: none;
  display: grid;
  align-items: center;
  background: ${(p) => (p.$flat ? "#fff" : "#e1e1e1")};
  border: ${(p) => (p.$flat ? "0" : "1px solid #adadad")};
  color: ${(p) => (p.$dim ? "#7d8278" : "inherit")};
  & > * { grid-area: 1 / 1; }
  & > svg { justify-self: end; margin-right: 4px; pointer-events: none; }
  & > select { appearance: none; width: 100%; height: 100%; padding: 0 24px 0 3px; outline: none; }
`;
const EditType = styled.button`
  display: flex;
  align-items: center;
  gap: 4px;
`;
const PropsArea = styled.div`
  flex: 1;
  min-height: 0;
  display: grid;
  grid-template-columns: 1fr 19px;
  gap: 1px;
  padding: 0 4px 0 2px;
`;
const TableClip = styled.div`
  overflow: hidden;
  background: #fff;
`;
const PropTable = styled.table`
  width: 100%;
  table-layout: fixed;
  border-collapse: collapse;
  tr { height: 24px; }
  td, th { padding: 0; font-weight: 400; text-align: left; white-space: pre; overflow: hidden; height: 24px; line-height: 20px; }
  tr.row > * { border-bottom: 1px dotted #777; border-right: 1px dotted #777; padding-bottom: 1px; }
  tr.row > th { padding-left: 10px; }
  tr.row > td { padding-left: 2px; }
  tr.off { color: #7d8278; }
`;
const Col = styled.col<{ $w?: number }>`
  width: ${(p) => (p.$w ? `${p.$w}px` : "auto")};
`;
const GroupCell = styled.th`
  background: #dadada;
  & > div { display: flex; justify-content: space-between; padding: 0 6px 0 2px; align-items: center; }
`;
const Check = styled.input`
  appearance: none;
  display: block;
  width: 16px;
  height: 16px;
  border: 1px solid #222;
  background: #fff;
  &:disabled { border-color: #ccc; }
`;
const EditButton = styled.button`
  display: block;
  width: 115px;
  height: 22px;
  margin-left: -1px;
  background: #e1e1e1;
  border: 1px solid #adadad;
  border-right-width: 2px;
  border-bottom-width: 2px;
  line-height: 18px;
`;
const ScaleInput = styled.input`
  display: block;
  width: 116px;
  height: 22px;
  margin-left: -2px;
  border: 1px solid #000;
  padding-left: 6px;
`;
const ScrollV = styled.div<{ $top: number; $len: number }>`
  background: #efefef;
  display: flex;
  flex-direction: column;
  justify-content: space-between;
  align-items: center;
  min-height: 0;
  position: relative;
  &::before { content: ""; position: absolute; left: 0; right: 0; top: ${(p) => p.$top}%; height: ${(p) => p.$len}%; background: #cdcdcd; }
`;
const ArrowSlot = styled.span`
  padding: 5px 0;
`;
const PropFoot = styled.div`
  height: 33px;
  flex: none;
  display: flex;
  align-items: flex-start;
  justify-content: space-between;
  padding: 2px 5px 0 4px;
  & > a { color: #0a66c2; line-height: 22px; }
`;
const Apply = styled.button`
  width: 86px;
  height: 26px;
  background: #cbcbcb;
  border: 1px solid #bdbdbd;
  color: #8a8a8a;
`;

const Center = styled.div`
  display: flex;
  flex-direction: column;
  min-width: 0;
  min-height: 0;
  background: #fff;
`;
const DocTabs = styled.div`
  height: 25px;
  flex: none;
  background: #cbcbcb;
  display: flex;
  align-items: center;
`;
const DocTab = styled.button<{ $w: number; $active?: boolean }>`
  width: ${(p) => p.$w}px;
  height: 25px;
  display: flex;
  align-items: center;
  gap: 9px;
  padding: 0 4px 0 6px;
  color: ${(p) => (p.$active ? "#222" : "#4a4a4a")};
  font-weight: ${(p) => (p.$active ? 600 : 400)};
  background: ${(p) => (p.$active ? "#fff" : "transparent")};
  & > span { flex: 1; text-align: left; }
`;
const TabMenu = styled.button`
  margin-left: auto;
  margin-right: 3px;
`;
const ViewGrid = styled.div`
  flex: 1;
  min-height: 0;
  display: grid;
  grid-template-columns: minmax(0, 1fr) 20px;
  grid-template-rows: minmax(0, 1fr) 21px;
  border-right: 1px solid #ccc;
  border-bottom: 1px solid #ccc;
  margin: 0 2px 2px 0;
`;
const Canvas = styled.div`
  position: relative;
  overflow: hidden;
  background: #fff;
`;
const CubeWrap = styled.div`
  position: absolute;
  right: 20px;
  top: 66px;
  width: 142px;
  display: grid;
  justify-items: center;
`;
const CubeFace = styled.button`
  width: 52px;
  height: 52px;
  background: linear-gradient(#eeeff0, #e0e1e2);
  border: 1px solid #b0b2b4;
  color: #8d9093;
  font-size: 11px;
  font-weight: 700;
`;
const ViewBar = styled.div`
  background: #efefef;
  display: flex;
  align-items: center;
  margin-left: 2px;
`;
const ScaleLabel = styled.button`
  width: 89px;
  padding-left: 5px;
  font-size: 13px;
  font-family: "DejaVu Sans Condensed", "DejaVu Sans", sans-serif;
`;
const HTrack = styled.div`
  flex: 1;
  height: 19px;
  display: flex;
  align-items: center;
  & > i { width: 21px; height: 19px; background: #cdcdcd; margin-left: 48.4%; }
  & > svg { margin-left: auto; margin-right: 6px; }
`;
const Corner = styled.div`
  background: #efefef;
  display: grid;
  place-items: end;
  padding: 3px;
`;

/* ---------- project browser ---------- */
const TreeArea = styled.div`
  flex: 1;
  min-height: 0;
  display: grid;
  grid-template-columns: minmax(0, 1fr) 19px;
  margin: 0 1px 0 2px;
  gap: 1px;
`;
const Tree = styled.ul`
  margin: 0;
  padding: 1px 0 0;
  list-style: none;
  background: #fff;
  overflow: hidden;
`;
const TreeRow = styled.li`
  height: 22px;
  margin-left: -3px;
  display: flex;
  align-items: center;
  white-space: nowrap;
`;
const Guide = styled.span<{ $v?: "full" | "top" | "bottom" | "none" }>`
  width: 26px;
  height: 22px;
  flex: none;
  position: relative;
  display: grid;
  place-items: center;
  &::before {
    content: "";
    position: absolute;
    left: 12px;
    top: ${(p) => (p.$v === "bottom" ? 11 : 0)}px;
    bottom: ${(p) => (p.$v === "top" ? 11 : 0)}px;
    border-left: ${(p) => (p.$v === "none" ? 0 : 1)}px dotted #999;
  }
`;
const Toggle = styled.button`
  width: 13px;
  height: 13px;
  border: 1px solid #8b8b8b;
  background: #f4f4f4;
  position: relative;
  display: grid;
  place-items: center;
`;
const Dots = styled.i<{ $w: number; $pull?: boolean }>`
  width: ${(p) => p.$w}px;
  flex: none;
  border-top: 1px dotted #999;
  margin-left: ${(p) => (p.$pull ? -13 : -5)}px;
  margin-right: 1px;
`;
const NodeText = styled.span<{ $sel?: boolean }>`
  line-height: 22px;
  padding-left: 3px;
  flex: 1;
  background: ${(p) => (p.$sel ? "#e2e2e2" : "transparent")};
`;
const HScroll = styled.div`
  height: 22px;
  flex: none;
  display: flex;
  align-items: center;
  justify-content: space-between;
  padding: 0 26px 2px 5px;
  & > i { width: 22px; height: 19px; background: #cdcdcd; margin-right: 36px; }
`;

/* ---------- status bar ---------- */
const StatusBar = styled.footer`
  height: 32px;
  flex: none;
  background: #cbcbcb;
  display: flex;
  align-items: center;
  padding: 1px 0 0 2px;
`;
const StatusText = styled.span`
  width: 682px;
`;
const Count = styled.span<{ $w: number }>`
  width: ${(p) => p.$w}px;
  color: #444;
`;
const StatusIcons = styled.div`
  margin-left: auto;
  display: flex;
  align-items: center;
`;

/* ---------- taskbar ---------- */
const Taskbar = styled.div`
  height: 50px;
  flex: none;
  background: #1f1f1f;
  display: flex;
  color: #fff;
`;
const TaskButton = styled.button<{ $w?: number; $run?: boolean; $on?: boolean }>`
  width: ${(p) => p.$w ?? 62}px;
  display: grid;
  place-items: center;
  background: ${(p) => (p.$on ? "#4b4c4e" : "transparent")};
  ${(p) => (p.$run || p.$on) && `
    background-image: linear-gradient(#76b9ed, #76b9ed);
    background-repeat: no-repeat;
    background-position: bottom center;
    background-size: ${p.$on ? "100%" : "50px"} 3px;
  `}
`;
const Search = styled.label`
  width: 430px;
  background: #f2f2f2;
  border: 1px solid #c0c0c0;
  border-bottom-color: #999;
  display: flex;
  align-items: center;
  gap: 15px;
  padding-left: 14px;
  color: #333;
  & > input { flex: 1; font-size: 16px; outline: none; }
  & > input::placeholder { color: #3a3a3a; opacity: 1; }
`;
const Tray = styled.div`
  margin-left: auto;
  display: flex;
  align-items: center;
  height: 50px;
`;
const Clock = styled.time`
  width: 96px;
  text-align: center;
  line-height: 23px;
  white-space: pre;
`;
const Edge = styled.i`
  width: 6px;
  height: 50px;
  margin-left: 16px;
  border-left: 1px solid #666;
`;

const Watermark = styled.div`
  position: absolute;
  left: 50%;
  bottom: 24px;
  width: 232px;
  margin-left: -116px;
  display: grid;
  justify-items: center;
  pointer-events: none;
  color: rgba(150, 154, 160, 0.32);
  font-weight: 700;
`;
const MarkArabic = styled.div`
  font-family: "DejaVu Sans", sans-serif;
  font-size: 66px;
  line-height: 68px;
`;
const MarkLatin = styled.div`
  font-family: "Open Sans", sans-serif;
  font-size: 38px;
  line-height: 38px;
`;

/* ---------- small glyphs ---------- */
const Chevron = ({ dir }: { dir: "up" | "down" | "left" | "right" }) => {
  const d = { up: "M1 9l5-5 5 5", down: "M1 3l5 5 5-5", left: "M8 1L3 6l5 5", right: "M4 1l5 5-5 5" }[dir];
  return (
    <svg width="12" height="12" viewBox="0 0 12 12" aria-hidden="true">
      <path d={d} fill="none" stroke="#555" strokeWidth="2" />
    </svg>
  );
};
const ThinChevron = () => (
  <svg width="12" height="12" viewBox="0 0 12 12" aria-hidden="true">
    <path d="M1 3l5 5 5-5" fill="none" stroke="#666" strokeWidth="1.200" />
  </svg>
);
const Collapse = () => (
  <svg width="7" height="16" viewBox="0 0 7 16" aria-hidden="true">
    <path d="M1 4l2.500-2.500L6 4M1 8.500L3.500 6 6 8.500" fill="none" stroke="#000" strokeWidth="1.400" />
  </svg>
);

/* ---------- elevation drawing ---------- */
const GREY = "#808080";

const Arch = ({ x1, x2, inner }: { x1: number; x2: number; inner: number }) => {
  const r = (x2 - x1) / 2;
  const s = 610.5 + r;
  const xi = x2 - inner;
  return (
    <g>
      <path d={`M${x1} 727V${s}A${r} ${r} 0 0 1 ${x2} ${s}V727Z`} fill={GREY} stroke="none" />
      <path
        d={`M${x1} 727V${s - 4}L${x1 + 3} ${inner > 14 ? 627 : 623}C${x1 + 20} ${inner > 14 ? 626 : 622} ${xi} ${s - 2} ${xi} ${s + 17}V727Z`}
        fill="#fff"
        stroke="none"
      />
      <path d={`M${x1} 727V${s}A${r} ${r} 0 0 1 ${x2} ${s}V727`} fill="none" />
    </g>
  );
};

const Dome = ({ x1, x2, y, top, w = 1 }: { x1: number; x2: number; y: number; top: number; w?: number }) => {
  const c = (x2 - x1) / 2;
  const h = y - top;
  const r = (c * c + h * h) / (2 * h);
  return <path d={`M${x1} ${y}A${r} ${r} 0 0 1 ${x2} ${y}`} fill="none" strokeWidth={w} />;
};

const frond = (tx: number, ty: number, lift: number, width: number) => {
  const n = 6;
  const mx = tx / 2;
  const my = ty / 2 - lift;
  const len = Math.hypot(tx, ty);
  const side = tx >= 0 ? 1 : -1;
  const outer: string[] = [];
  const back: string[] = [];
  for (let i = 0; i <= n; i++) {
    const t = i / n;
    const x = 2 * t * (1 - t) * mx + t * t * tx;
    const y = 2 * t * (1 - t) * my + t * t * ty;
    const bulge = Math.sin(Math.PI * Math.min(1, t)) * width * (i % 2 ? 1.3 : 0.7);
    outer.push(`${x.toFixed(1)} ${y.toFixed(1)}`);
    back.unshift(`${(x - (ty / len) * bulge * side).toFixed(1)} ${(y + (tx / len) * bulge * side).toFixed(1)}`);
  }
  return `M${outer.join("L")}L${back.join("L")}Z`;
};

const fronds: [number, number, number, number, boolean][] = [
  [-21, 31, 16, 5, false],
  [-17, 19, 10, 4, true],
  [17, 30, 16, 4, false],
  [21, 12, 8, 4, false],
  [-29, 0, 5, 4, false],
  [27, 1, 6, 4, false],
  [-19, -24, 0, 5, false],
  [23, -13, 5, 5, false],
  [12, -25, 2, 3, false],
];

const Palm = ({ x, y = 617, base = 728, shade = false, k = 1 }: { x: number; y?: number; base?: number; shade?: boolean; k?: number }) => (
  <g transform={`translate(${x} ${y}) scale(${k})`} stroke={shade ? "none" : "#000"}>
    <path d={`M-2.500 0V${(base - y) / k}H2.500V0Z`} fill={shade ? GREY : "#fff"} />
    {!shade && <path d={`M-4 24l1 12 3 6 2-8-1-30h-7z`} fill={GREY} stroke="none" />}
    {fronds.map(([tx, ty, l, w, g], i) => (
      <path key={i} d={frond(tx, ty, l, shade ? w * 2 : w)} fill={shade || g ? GREY : "#fff"} />
    ))}
    {shade && <path d="M-8-6l8-26 5 26 5 8-3 22-7 6-9-12z" fill={GREY} />}
    {!shade && <path d="M-6-4l4-3 3 2v9l-6 6-4-5z" fill={GREY} stroke="none" />}
    {!shade && <path d="M0 -31V38" strokeWidth="2" />}
  </g>
);

const range = (n: number) => Array.from({ length: n }, (_, i) => i);

const Bay = ({ x, crestW }: { x: number; crestW: number }) => (
  <g>
    <path d={`M${x + 55 - crestW} 614a${crestW} 8 0 0 1 ${crestW * 2} 0M${x + 58 - crestW} 614a${crestW - 3} 5 0 0 1 ${crestW * 2 - 6} 0`} fill="none" strokeWidth="2" />
    <rect x={x + 5} y="621" width="103" height="7" fill={GREY} stroke="none" />
    <rect x={x + 8} y="628" width="96" height="47" fill="#000" />
    <path d={`M${x} 614h112v7h-112z`} fill="#000" />
    <path d={`M${x + 5} 622l5 5M${x + 109} 622l-6 5`} />
    {range(9).map((i) => (
      <g key={i}>
        <rect x={x + 13.5 + i * 9.7} y="634" width="6" height="3" fill="#fff" stroke="none" />
        <rect x={x + 13.5 + i * 9.7} y="629" width="6" height="3" fill={GREY} stroke="none" />
        <circle cx={x + 17 + i * 9.7} cy="668" r="3" fill="none" stroke="#fff" strokeWidth="1.500" />
        <path d={`M${x + 12 + i * 9.7} 664v8`} stroke="#fff" />
      </g>
    ))}
    {range(6).map((i) => (
      <path key={i} d={`M${x + 14 + i * 14.6} 643.500h10M${x + 14 + i * 14.6} 648.500h10M${x + 14 + i * 14.6} 656.500h10`} stroke={GREY} />
    ))}
    <path d={`M${x + 12} 652.500h87M${x + 12} 661.500h87M${x + 12} 673.500h87`} stroke="#fff" strokeWidth="1.500" />
    <path d={`M${x + 27} 639v21M${x + 56} 639v21`} stroke="#fff" />
    <rect x={x + 8.5} y="622.500" width="4" height="53" fill="#fff" />
    <rect x={x + 99.5} y="622.500" width="4" height="53" fill="#fff" />
    <rect x={x + 8.5} y="675.500" width="95" height="4" fill="#fff" />
    {range(9).map((i) => (
      <rect key={i} x={x + 14.5 + i * 9.7} y="679.500" width="5" height="7" fill="#fff" />
    ))}
  </g>
);

/* saw-tooth lower edge of a bay's shadow, drawn right to left */
const saw = (n: number) => "h-5v-5l-4.700 5".repeat(n);

const Elevation = () => (
  <svg width="100%" height="100%" viewBox="278 243 1494 731" preserveAspectRatio="xMidYMid meet" role="img" aria-label="Front elevation" shapeRendering="crispEdges">
    <g stroke="#000" strokeWidth="1" fill="none">
      {/* domes */}
      <Dome x1={417} x2={534} y={584} top={553.5} />
      <Dome x1={530} x2={650} y={584} top={553.5} w={1.6} />
      <Dome x1={661} x2={781} y={584} top={553.5} />
      <Dome x1={961} x2={1083} y={559.5} top={527.5} />
      <Dome x1={1076} x2={1193} y={583} top={552.5} w={1.6} />
      <Dome x1={1206} x2={1316} y={579} top={552.5} />
      <Dome x1={1342} x2={1456} y={579} top={552.5} w={2} />

      {/* kiosk under the central dome */}
      <path d="M961 559.500h14M1071 559.500h12M975.500 553.500h95v6h-95zM976.500 559v25M979.500 559v25M1052.500 553v31M1056.500 553v31M1070.500 559v25M987.500 553v31" />
      <path d="M976 557.500h94" stroke={GREY} />

      {/* left wing */}
      <rect x="408.500" y="579.500" width="387" height="5" fill="none" />
      <path d="M407 585h396" strokeWidth="2" />
      <path d="M407.500 585v142M803.500 585v18h-7v-12M792.500 590v137" />
      <path d="M412 586h6l-4 22h-5z" fill={GREY} stroke="none" />
      {range(24).map((i) => {
        const x = Math.round(428.5 + i * 15.13);
        return (
          <g key={i}>
            <path d={`M${x - 7} 592l4-4h6l6 6-3 3-3 1v5h-3v-6z`} fill={GREY} stroke="none" />
            <path d={`M${x - 3} 590l3-2 4 2z`} fill="#000" stroke="none" />
            <path d={`M${x} 603h10l-3 5h-7z`} fill={GREY} stroke="none" />
            <path d={`M${x + 5}.500 597.500h-2v6h8v-6h-2l2-3`} fill="#fff" />
            <path d={`M${x + 6} 584l1.500-2 1.500 2`} />
          </g>
        );
      })}
      <path d="M407 666.500h14M471 666.500h31M553 666.500h25M629 666.500h20M700 666.500h23M774 666.500h27" />
      <path d="M415 700v27h6V640z" fill={GREY} stroke="none" />
      <Arch x1={420.5} x2={471.5} inner={17} />
      <Arch x1={502.5} x2={553.5} inner={17} />
      <Arch x1={578.5} x2={629.5} inner={17} />
      <Arch x1={649.5} x2={700.5} inner={17} />
      <Arch x1={723.5} x2={774.5} inner={17} />
      <path d="M418 727h375" strokeWidth="2" />

      {/* central block */}
      <path d="M803 584.500h277" />
      <path d="M803 586.500h277" stroke={GREY} />
      <path d="M884.500 586v28" />
      <path d="M1069 587L1030 626v6h-3v19h3v76h39zM1069 587h11v11l-4 12h-7z" fill={GREY} stroke="none" />
      <path d={`M793 621h90v70l-22 23${saw(7)}z`} fill={GREY} stroke="none" />
      <path d={`M914 615l-17 17v48l-4 2v25h8v7l5-5M901 709v5l5-5L982 714l23-23V621H897v86z`} fill={GREY} stroke="none" />
      <path d={`M1005 691l-23 23${saw(8)}V690z`} fill={GREY} stroke="none" />
      <path d="M793 666.500h8M897 666.500h26M1018 666.500h51" />
      <Bay x={793} crestW={8} />
      <Bay x={914} crestW={6} />
      <path d="M1031 684v-2q7-14 20-14t18 10M1031 684.500h38M1031.500 685v42M1033.500 687h36" fill="none" />
      <path d="M1050.500 685v42" strokeWidth="3" />
      <path d="M1069.500 586v141" />

      {/* right wing */}
      <path d="M1080.500 598v-18.500h388v19" fill="none" />
      {range(24).map((i) => {
        const x = Math.round(1093.5 + i * 15.18);
        return (
          <g key={i}>
            <path d={`M${x - 7} 590l4-4h6l5 4-3 4v4h-8v-4z`} fill={GREY} stroke="none" />
            <path d={`M${x - 9} 598h9l5 6-6 6.500h-8l1-7z`} fill={GREY} stroke="none" />
            <path d={`M${x - 4} 586.500l4-4 4 4z`} fill={i > 9 && i < 13 ? "#000" : "#fff"} strokeWidth=".8" />
            <path d={`M${x + 6}.500 592.500h-2v6h6v-6h-2l2-3`} fill="#fff" />
          </g>
        );
      })}
      <path d="M1081 626.500h8M1132 626.500h22M1197 626.500h25M1268 626.500h42M1352 626.500h39M1436 626.500h11M1081 666.500h4M1135 666.500h17M1200 666.500h20M1271 666.500h35M1357 666.500h34M1441 666.500h5M1149.500 627v100" />
      <Arch x1={1084.5} x2={1135.5} inner={12} />
      <Arch x1={1152.5} x2={1200.5} inner={12} />
      <Arch x1={1220.5} x2={1271.5} inner={12} />
      <Arch x1={1305.5} x2={1356.5} inner={12} />
      <Arch x1={1391.5} x2={1441.5} inner={12} />
      <path d="M1457.500 586v141M1072 727h386" />
      <Palm x={1289} y={659} base={726} shade k={1.1} />
      <Palm x={1325} y={688} base={726} shade k={1} />
      <path d="M1260 672l-10 4 7 3-4 42 5-1 8-30zM1457 615l-8 12 3 12-4 46 6-16 3-30z" fill={GREY} stroke="none" />
      <path d="M1271.500 636v90M1305.500 636v90" />

      {/* sign post */}
      <path d="M1464.500 672v73h9v-73z" fill={GREY} />
      <path d="M1468.500 580v30M1471.500 579.500h4v30" />
      <rect x="1457.500" y="608.500" width="23" height="64" fill="#fff" />
      <path d="M1457 612.500h24M1457 616.500h24M1471.500 617v56" />
      <path d="M1468.500 672v73M1436 745.500h62" strokeWidth="1.500" />

      {/* ground, steps */}
      <path d="M393 600h14v72h-14zM389 640h5v88h-5zM404 672h3v55h-3z" fill={GREY} />
      <rect x="328.500" y="728.500" width="1193" height="3" fill="#fff" />
      <path d="M1367 730.500h48" stroke={GREY} strokeWidth="2" />
      <path d="M1520 728.500h5" />
      <rect x="790" y="732" width="283" height="14" fill="#000" stroke="none" />
      <path d="M793 734.500h278M793 737.500h278M793 740.500h278M793 743.500h278" stroke={GREY} />
      <path d="M792 727h280" strokeWidth="3" />

      {/* palms */}
      <Palm x={391} y={622} k={0.8} />
      <Palm x={377} />
      <Palm x={432} />
      <Palm x={1337} />
      <Palm x={1393} />
      <path d="M1478 622l-6 20 6-8v10l6-6 2 10-4 12 4 8-4 8 6-10-1-14-4-12z" fill="#fff" />
      <Palm x={1494} />
    </g>
  </svg>
);

/* ---------- data ---------- */
type Prop = { label: string; value?: string; kind?: "edit" | "check" | "scale"; off?: boolean };
const groups: { title: string; rows: Prop[] }[] = [
  {
    title: "Graphics",
    rows: [
      { label: "View Scale", value: "1 : 200", kind: "scale" },
      { label: "Scale Value    1:", value: "200", off: true },
      { label: "Detail Level", value: "Medium" },
      { label: "Parts Visibility", value: "Show Original" },
      { label: "Visibility/Grap...", kind: "edit" },
      { label: "Graphic Displa...", kind: "edit" },
      { label: "Discipline", value: "Coordination" },
      { label: "Show Hidden ...", value: "By Discipline" },
      { label: "Default Analys...", value: "None" },
      { label: "Sun Path", kind: "check" },
    ],
  },
  {
    title: "Extents",
    rows: [
      { label: "Crop View", kind: "check" },
      { label: "Crop Region V...", kind: "check" },
      { label: "Annotation Cr...", kind: "check" },
      { label: "Far Clip Active", kind: "check" },
      { label: "Far Clip Offset", value: "304.8000", off: true },
      { label: "Scope Box", value: "None" },
      { label: "Section Box", kind: "check" },
    ],
  },
  {
    title: "Camera",
    rows: [
      { label: "Rendering Set...", kind: "edit" },
      { label: "Locked Orient...", kind: "check", off: true },
      { label: "Projection Mo...", value: "Orthographic" },
      { label: "Eye Elevation", value: "5.1133" },
      { label: "Target Elevati...", value: "5.1133" },
      { label: "" },
    ],
  },
];

type TreeNode = { text: string; kids?: string[] };
const tree: TreeNode[] = [
  { text: "Structural Plans" },
  { text: "Floor Plans", kids: ["Level 0", "Level 1", "Level 2", "Level 3", "Level 4", "Site"] },
  { text: "Ceiling Plans", kids: ["Level 0", "Level 1", "Level 2", "Level 3", "Level 4", "Level 5"] },
  { text: "3D Views" },
  { text: "Elevations", kids: ["East", "North", "South", "West"] },
  { text: "Sections", kids: ["Section 1"] },
  { text: "Sections", kids: ["Section 1", "Section 2", "Section 3", "Section 4", "Section 5", "Section 6", "Section 7", "Section 8"] },
  { text: "Renderings" },
];

const tabs = ["Structure", "Steel", "Systems", "Insert", "Annotate", "Analyze", "Massing & Site", "Collaborate", "View", "Manage", "Add-Ins", "V-Ray", "Modify"];

type Tool = { i: string; t: string; w: number; off?: boolean; c?: "below" | "side"; on?: boolean };
const Tools = ({ items }: { items: Tool[] }) => (
  <>
    {items.map((b) => (
      <BigButton key={b.t} $w={b.w} $off={b.off} $on={b.on}>
        <BigIcon name={b.i} />
        <span>{b.t}</span>
        {b.c === "below" && <Caret />}
        {b.c === "side" && <SideCaret as="b" />}
      </BigButton>
    ))}
  </>
);
const Small = ({ items, mid, ml }: { items: [string, string, boolean?][]; mid?: boolean; ml?: number }) => (
  <List $mid={mid} $ml={ml}>
    {items.map(([i, t, off]) => (
      <ListButton key={t} $off={off}>
        <Icon name={i} />
        {t}
      </ListButton>
    ))}
  </List>
);

const quick: (string | [string, number])[] = [
  ["revit", 29], ["home", 29], ["open", 38], ["save", 26], ["sync", 32], "v",
  ["undo", 28], "v", ["redo", 32], "v", ["print", 27], "|", ["measure", 36], "v",
  ["dim", 28], ["tag", 30], ["textA", 29], "|", ["house", 36], "v", ["section", 22], ["thin", 38], "|",
  ["closeHidden", 30], ["switchWin", 28], "v", ["custom", 22],
];

const Value = ({ p, id }: { p: Prop; id: string }) => {
  if (p.kind === "scale") return <ScaleInput id={id} defaultValue={p.value} />;
  if (p.kind === "edit") return <EditButton id={id}>Edit...</EditButton>;
  if (p.kind === "check") return <Check id={id} type="checkbox" disabled={p.off} />;
  return <output id={id}>{p.value}</output>;
};

const taskIcons: { name: string; w?: number; run?: boolean; on?: boolean; art: React.ReactNode }[] = [
  { name: "Cortana", w: 60, art: <circle cx="16" cy="16" r="9" fill="none" stroke="#fff" strokeWidth="2.500" /> },
  {
    name: "Task view", w: 63,
    art: <path d="M5 7v3h12V7M5 26v-4h12v4M5 13h12v6H5zM22 6v4M22 18v8M20.500 13h3v3h-3z" fill="none" stroke="#fff" strokeWidth="1.300" />,
  },
  {
    name: "Network app",
    art: (
      <g>
        <circle cx="16" cy="16" r="15" fill="#fff" />
        <path d="M5 22V15L16 5l11 10v7l-4 3V16l-7-6-7 6v9z" fill="#1f1f1f" />
        <path d="M12 17l4-4 4 4v9h-2v-8l-2-2-2 2v8h-2z" fill="#1f1f1f" />
      </g>
    ),
  },
  { name: "Mail", art: <path d="M1 12L16 3l15 9v16H1zM1 12h30L17 20z" fill="#fff" stroke="#1f1f1f" fillRule="evenodd" /> },
  {
    name: "Word",
    art: (
      <g>
        <path d="M8 3h21v26H8z" fill="#e9f1fa" stroke="#7ea6d6" />
        <path d="M3 4h20l2 18-5 4H3z" fill="#2b6cc0" />
        <path d="M6 8l3 13 4-11 4 11 3-13" fill="none" stroke="#fff" strokeWidth="2.500" />
      </g>
    ),
  },
  {
    name: "Photos", run: true,
    art: (
      <g>
        <path d="M3 3h26v26H3z" fill="#1f1f1f" stroke="#fff" strokeWidth="2" />
        <path d="M4 28V22l8-9 6 7 4-4 6 7v5z" fill="#fff" />
      </g>
    ),
  },
  {
    name: "Edge",
    art: (
      <g>
        <circle cx="16" cy="16" r="15" fill="#1d78cf" />
        <path d="M2 12C6-2 32-1 31 15c0 5-6 6-10 4 3-3 0-9-6-9-6 0-10 3-13 2z" fill="#3fc7a0" />
        <path d="M2 12C6 0 20-1 25 5c-6-3-13-1-12 8-3-4-8-3-11-1z" fill="#2d9fe0" />
        <path d="M12 15c-4 6 1 14 11 13-7 6-20 1-20-10 2-4 6-5 9-3z" fill="#0f4a93" />
      </g>
    ),
  },
  {
    name: "File Explorer", run: true,
    art: (
      <g>
        <path d="M2 5h10l3 4h15v18H2z" fill="#f5b93c" />
        <path d="M2 11h28v16H2z" fill="#fddb83" />
        <path d="M7 29v-9h18v9h-5v-5h-8v5z" fill="#3f96dd" />
      </g>
    ),
  },
  {
    name: "Snipping Tool",
    art: (
      <g>
        <ellipse cx="14" cy="12" rx="12" ry="9" transform="rotate(-30 14 12)" fill="#f4f4f4" stroke="#c4592a" strokeWidth="1.500" />
        <path d="M8 20l12-3" stroke="#999" strokeWidth="3" />
        <ellipse cx="19" cy="26" rx="2.500" ry="4.500" fill="none" stroke="#2f86d6" strokeWidth="2" />
        <ellipse cx="26" cy="20" rx="4" ry="2.500" fill="none" stroke="#2f86d6" strokeWidth="2" />
      </g>
    ),
  },
  {
    name: "Revit", on: true,
    art: (
      <g>
        <path d="M1 1h30v30H1z" fill="#dce9f5" />
        <path d="M9 5l8-1c9 0 9 10 3 12l5 10h-5l-5-9v9H9zM15 8v6c5 0 5-6 0-6z" fill="#1c5fa8" fillRule="evenodd" />
      </g>
    ),
  },
];

export default function App() {
  return (
    <Shell>
      <Global />
      <TitleBar>
        <QuickBar>
          {quick.map((q, i) =>
            q === "v" ? (
              <CaretButton key={i} aria-label="More"><Caret /></CaretButton>
            ) : q === "|" ? (
              <VRule key={i} />
            ) : (
              <IconButton key={i} $w={q[1] as number} aria-label={q[0]}><Icon name={q[0]} /></IconButton>
            ),
          )}
        </QuickBar>
        <WindowTitle>Autodesk Revit 2020 - section spa - 3D View: {"{3D}"}</WindowTitle>
        <TitleRight>
          <LeftArrow />
          <IconButton $w={40} aria-label="Search"><Icon name="binoculars" /></IconButton>
          <SignIn><Icon name="user" />Sign In</SignIn>
          <CaretButton aria-label="Account menu"><Caret /></CaretButton>
          <IconButton $w={38} aria-label="App store"><Icon name="cart" /></IconButton>
          <VRule />
          <IconButton $w={33} aria-label="Help"><Icon name="help" /></IconButton>
          <CaretButton aria-label="Help menu"><Caret /></CaretButton>
          <WindowButtons>
            <IconButton $w={28} aria-label="Minimize"><Icon name="min" size={18} /></IconButton>
            <IconButton $w={32} aria-label="Restore"><Icon name="restore" size={18} /></IconButton>
            <IconButton aria-label="Close"><Icon name="close" /></IconButton>
          </WindowButtons>
        </TitleRight>
      </TitleBar>
      <RibbonTabs>
        <RibbonTab $kind="file">File</RibbonTab>
        <RibbonTab $kind="active">Architecture</RibbonTab>
        {tabs.map((t) => (
          <RibbonTab key={t}>{t}</RibbonTab>
        ))}
        <TabsTool aria-label="Ribbon display"><Icon name="panelSwitch" /><Caret /></TabsTool>
      </RibbonTabs>
      <Ribbon>
        <Panel $w={73} $pad={10}>
          <PanelBody><Tools items={[{ i: "modify", t: "Modify", w: 53, on: true }]} /></PanelBody>
          <PanelTitle>Select <Caret $s={5} /></PanelTitle>
        </Panel>
        <Panel $w={177} $pad={7}>
          <PanelBody>
            <Tools items={[{ i: "railing", t: "Railing", w: 64, c: "below" }, { i: "ramp", t: "Ramp", w: 58 }, { i: "stair", t: "Stair", w: 40 }]} />
          </PanelBody>
          <PanelTitle>Circulation</PanelTitle>
        </Panel>
        <Panel $w={173} $pad={3}>
          <PanelBody>
            <Tools items={[{ i: "mtext", t: "Model\nText", w: 50 }, { i: "mline", t: "Model\nLine", w: 50 }, { i: "mgroup", t: "Model\nGroup", w: 68, c: "side" }]} />
          </PanelBody>
          <PanelTitle>Model</PanelTitle>
        </Panel>
        <Panel $w={378} $pad={1}>
          <PanelBody>
            <Tools
              items={[
                { i: "room", t: "Room", w: 52, off: true },
                { i: "roomsep", t: "Room\nSeparator", w: 67, off: true },
                { i: "tagroom", t: "Tag\nRoom", w: 74, c: "side" },
                { i: "area", t: "Area", w: 48, c: "below" },
                { i: "areab", t: "Area\nBoundary", w: 78, off: true },
                { i: "tagarea", t: "Tag\nArea", w: 50, c: "side" },
              ]}
            />
          </PanelBody>
          <PanelTitle>Room & Area <Caret $s={5} /></PanelTitle>
        </Panel>
        <Panel $w={675} $pad={3}>
          <PanelBody>
            <Tools
              items={[
                { i: "wall", t: "Wall", w: 54, c: "below" },
                { i: "door", t: "Door", w: 50 },
                { i: "window", t: "Window", w: 60 },
                { i: "component", t: "Component", w: 110, c: "below" },
                { i: "column", t: "Column", w: 74, c: "below" },
                { i: "roof", t: "Roof", w: 66, c: "below" },
                { i: "ceiling", t: "Ceiling", w: 48 },
                { i: "floor", t: "Floor", w: 68, c: "below" },
              ]}
            />
            <Small ml={3} items={[["csystem", "Curtain  System"], ["cgrid", "Curtain  Grid"], ["mullion", "Mullion"]]} />
          </PanelBody>
          <PanelTitle>Build</PanelTitle>
        </Panel>
        <Panel $w={191} $pad={4}>
          <PanelBody>
            <Tools items={[{ i: "byface", t: "By\nFace", w: 46 }, { i: "shaft", t: "Shaft", w: 48 }]} />
            <Small ml={5} items={[["owall", "Wall"], ["overt", "Vertical"], ["dormer", "Dormer"]]} />
          </PanelBody>
          <PanelTitle>Opening</PanelTitle>
        </Panel>
        <Panel $w={81} $pad={4}>
          <PanelBody><Small mid items={[["level", "Level", true], ["grid", "Grid", true]]} /></PanelBody>
          <PanelTitle>Datum</PanelTitle>
        </Panel>
        <Panel $pad={2}>
          <PanelBody>
            <Tools items={[{ i: "set", t: "Set", w: 46 }]} />
            <Small ml={6} items={[["show", "Show"], ["refplane", "Ref  Plane", true], ["viewer", "Viewer"]]} />
          </PanelBody>
          <PanelTitle $shift={14}>Work Plane</PanelTitle>
        </Panel>
      </Ribbon>
      <OptionsBar />
      <Workspace>
        <Side>
          <SideHead>Properties <button aria-label="Close properties"><Icon name="close" size={20} /></button></SideHead>
          <TypeBox>
            <Thumb><Icon name="house" size={42} /></Thumb>
            <span>3D View</span>
            <Caret $s={5} />
          </TypeBox>
          <InstanceRow>
            <SelectWrap $w={175}>
              <select aria-label="Instance"><option>3D View: {"{3D}"}</option></select>
              <ThinChevron />
            </SelectWrap>
            <EditType><Icon name="editType" size={18} />Edit Type</EditType>
          </InstanceRow>
          <PropsArea>
            <TableClip>
              <PropTable>
                <colgroup><Col $w={118} /><Col $w={117} /><Col /></colgroup>
                <tbody>
                  {groups.map((g) => (
                    <React.Fragment key={g.title}>
                      <tr><GroupCell colSpan={3}><div>{g.title}<Collapse /></div></GroupCell></tr>
                      {g.rows.map((p, i) => (
                        <tr key={i} className={p.off ? "row off" : "row"}>
                          <th scope="row"><label htmlFor={`${g.title}-${i}`}>{p.label}</label></th>
                          <td><Value p={p} id={`${g.title}-${i}`} /></td>
                          <td />
                        </tr>
                      ))}
                    </React.Fragment>
                  ))}
                </tbody>
              </PropTable>
            </TableClip>
            <ScrollV $top={3.5} $len={67.5}>
              <ArrowSlot><Chevron dir="up" /></ArrowSlot>
              <ArrowSlot><Chevron dir="down" /></ArrowSlot>
            </ScrollV>
          </PropsArea>
          <PropFoot><a href="#help">Properties help</a><Apply disabled>Apply</Apply></PropFoot>
        </Side>
        <Center>
          <DocTabs>
            <DocTab $w={208}><Icon name="teapot" /><span>2023_01_09_20_30_21</span></DocTab>
            <DocTab $w={160}><Icon name="elev" /><span>East</span></DocTab>
            <DocTab $w={160}><Icon name="elev" /><span>North</span></DocTab>
            <DocTab $w={160} $active><Icon name="house" /><span>{"{3D}"}</span><Icon name="close" /></DocTab>
            <TabMenu aria-label="View list"><Icon name="custom" size={18} /></TabMenu>
          </DocTabs>
          <ViewGrid>
            <Canvas>
              <Elevation />
              <CubeWrap>
                <CubeFace>FRONT</CubeFace>
                <svg width="142" height="12" viewBox="0 0 142 12" aria-hidden="true">
                  <ellipse cx="71" cy="2" rx="36" ry="4" fill="#d4d4d4" />
                  <ellipse cx="71" cy="4" rx="69" ry="5" fill="none" stroke="#c4c4c4" strokeDasharray="5 3" />
                  <ellipse cx="71" cy="4" rx="54" ry="3" fill="none" stroke="#ddd" strokeDasharray="2 4" />
                  <path d="M64 8h14l-7 3zM1 4l8-2v4zM141 4l-8-2v4z" fill="#aaa" />
                </svg>
              </CubeWrap>
            </Canvas>
            <ScrollV $top={48.6} $len={2.9}>
              <ArrowSlot><Chevron dir="up" /></ArrowSlot>
              <ArrowSlot><Chevron dir="down" /></ArrowSlot>
            </ScrollV>
            <ViewBar>
              <ScaleLabel>1 : 200</ScaleLabel>
              {["vDetail", "vStyle", "vSun", "vShadow", "vRender", "vCrop", "vCropShow", "vLock", "vGlasses", "vBulb", "vTemp", "vAnalytic", "vHigh", "vReveal"].map((n) => (
                <IconButton key={n} $w={25} aria-label={n.slice(1)}><Icon name={n} /></IconButton>
              ))}
              <ArrowSlot><Chevron dir="left" /></ArrowSlot>
              <HTrack><i /><Chevron dir="right" /></HTrack>
            </ViewBar>
            <Corner>
              <svg width="11" height="11" viewBox="0 0 11 11" aria-hidden="true">
                <path d="M8 0h3v3H8zM4 4h3v3H4zM8 4h3v3H8zM0 8h3v3H0zM4 8h3v3H4zM8 8h3v3H8z" fill="#bbb" />
              </svg>
            </Corner>
          </ViewGrid>
        </Center>
        <Side>
          <SideHead>Project Brow... <button aria-label="Close browser"><Icon name="close" size={20} /></button></SideHead>
          <TreeArea>
            <Tree>
              <TreeRow>
                <Guide $v="bottom"><Toggle aria-label="Collapse"><svg width="9" height="9"><path d="M0 4.500h9" stroke="#2a5db0" /></svg></Toggle></Guide>
                <Dots $w={7} />
                <Icon name="viewsRoot" />
                <NodeText>Views (all)</NodeText>
              </TreeRow>
              {tree.map((n, i) => (
                <React.Fragment key={i}>
                  <TreeRow>
                    <Guide />
                    <Guide>
                      <Toggle aria-label={n.kids ? "Collapse" : "Expand"}>
                        <svg width="9" height="9"><path d={n.kids ? "M0 4.500h9" : "M0 4.500h9M4.500 0v9"} stroke="#2a5db0" /></svg>
                      </Toggle>
                    </Guide>
                    <Dots $w={11} />
                    <NodeText>{n.text}</NodeText>
                  </TreeRow>
                  {n.kids?.map((k, j) => (
                    <TreeRow key={k}>
                      <Guide />
                      <Guide />
                      <Guide $v={j === n.kids!.length - 1 ? "top" : "full"} />
                      <Dots $w={18} $pull />
                      <NodeText $sel={k === "North"}>{k}</NodeText>
                    </TreeRow>
                  ))}
                </React.Fragment>
              ))}
            </Tree>
            <ScrollV $top={2.8} $len={35.5}>
              <ArrowSlot><Chevron dir="up" /></ArrowSlot>
              <ArrowSlot><Chevron dir="down" /></ArrowSlot>
            </ScrollV>
          </TreeArea>
          <HScroll><Chevron dir="left" /><i /><Chevron dir="right" /></HScroll>
        </Side>
      </Workspace>
      <StatusBar>
        <StatusText>Click to select, TAB for alternates, CTRL adds, SHIFT unselects.</StatusText>
        <IconButton $w={33} aria-label="Worksets"><Icon name="workset" /></IconButton>
        <SelectWrap $w={253} $flat>
          <select aria-label="Active workset" />
          <ThinChevron />
        </SelectWrap>
        <IconButton $w={36} aria-label="Editing requests"><Icon name="editable" /></IconButton>
        <Count $w={29}>:0</Count>
        <IconButton aria-label="Design options"><Icon name="options" /></IconButton>
        <IconButton $w={32} aria-label="Add to set"><Icon name="addSet" /></IconButton>
        <SelectWrap $w={255} $flat $dim>
          <select aria-label="Active design option"><option>Main Model</option></select>
          <ThinChevron />
        </SelectWrap>
        <StatusIcons>
          {["selLink", "selUnder", "selPin", "selFace", "selDrag", "gear"].map((n) => (
            <IconButton key={n} aria-label={n}><Icon name={n} /></IconButton>
          ))}
          <IconButton $w={24} aria-label="Filter"><Icon name="filter" /></IconButton>
          <Count $w={88}>:0</Count>
        </StatusIcons>
      </StatusBar>
      <Taskbar>
        <TaskButton $w={60} aria-label="Start">
          <svg width="20" height="20" viewBox="0 0 20 20"><path d="M0 3l8-1.200V9.500H0zM9 1.600L20 0v9.500H9zM0 10.500h8v7.700L0 17zM9 10.500h11V20L9 18.400z" fill="#fff" /></svg>
        </TaskButton>
        <Search>
          <svg width="20" height="20" viewBox="0 0 20 20"><circle cx="12.500" cy="7.500" r="6.500" fill="none" stroke="#222" strokeWidth="1.500" /><path d="M8 12.500L1 19.500" stroke="#222" strokeWidth="1.500" /></svg>
          <input type="search" aria-label="Search" placeholder="Type here to search" />
        </Search>
        {taskIcons.map((t) => (
          <TaskButton key={t.name} $w={t.w} $run={t.run} $on={t.on} aria-label={t.name}>
            <svg width="32" height="32" viewBox="0 0 32 32" fill="none">{t.art}</svg>
          </TaskButton>
        ))}
        <Tray>
          <IconButton $w={40} aria-label="Support">
            <svg width="28" height="28" viewBox="0 0 28 28">
              <circle cx="13" cy="13" r="12" fill="#2f8fdc" stroke="#fff" strokeWidth="2" />
              <path d="M9 10c0-6 9-5 8-1 0 3-4 3-4 6M13 18v3" fill="none" stroke="#fff" strokeWidth="2.500" />
              <circle cx="22" cy="20" r="6" fill="#2f8fdc" />
              <path d="M22 18v6M22 15v2" stroke="#fff" strokeWidth="2" />
            </svg>
          </IconButton>
          <IconButton aria-label="Hidden icons">
            <svg width="16" height="16" viewBox="0 0 16 16"><path d="M1 12l7-7 7 7" fill="none" stroke="#fff" strokeWidth="1.500" /></svg>
          </IconButton>
          <IconButton aria-label="Battery">
            <svg width="20" height="12" viewBox="0 0 20 12"><path d="M.7.7h16v10.600H.7z" fill="none" stroke="#fff" strokeWidth="1.400" /><path d="M3 3h11v6H3zM17 4h2v4h-2z" fill="#fff" /></svg>
          </IconButton>
          <IconButton aria-label="Volume">
            <svg width="20" height="18" viewBox="0 0 20 18"><path d="M1 6h3l4-4v14l-4-4H1zM10 6q2 3 0 6M13 4q3 5 0 10M16 2q5 7 0 14" fill="none" stroke="#fff" strokeWidth="1.200" /></svg>
          </IconButton>
          <IconButton $w={38} aria-label="Input language">ع</IconButton>
          <Clock>{"10:38 PM\n12/18/2024"}</Clock>
          <IconButton $w={38} aria-label="Notifications">
            <svg width="22" height="22" viewBox="0 0 22 22">
              <path d="M1 1h20v16H9l-4 4v-4H1z" fill="#fff" />
              <path d="M4 5h13M4 9h13M4 13h8" stroke="#1f1f1f" strokeWidth="1.300" />
              <path d="M17 10a5 5 0 1 0 5 7 5 5 0 0 1-5-7z" fill="#fff" stroke="#1f1f1f" />
            </svg>
          </IconButton>
          <Edge />
        </Tray>
      </Taskbar>
      <Watermark aria-hidden="true">
        <MarkArabic>مستقل</MarkArabic>
        <MarkLatin>mostaql.com</MarkLatin>
      </Watermark>
    </Shell>
  );
}
